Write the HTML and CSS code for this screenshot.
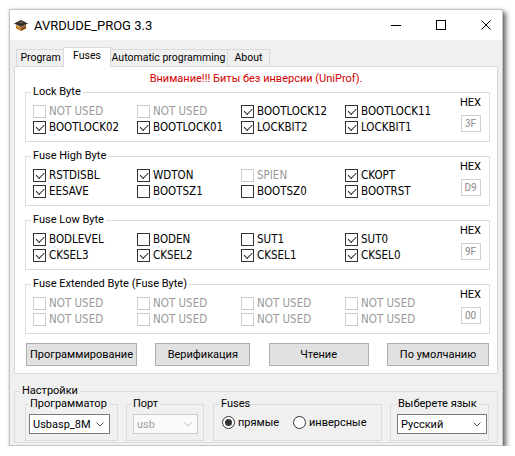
FILE: index.html
```html
<!DOCTYPE html>
<html lang="ru">
<head>
<meta charset="utf-8">
<title>AVRDUDE_PROG 3.3</title>
<link rel="stylesheet" href="styles.css">
</head>
<body>
<div class="window">
  <div class="titlebar">
    <svg class="appicon" width="14" height="12" viewBox="0 0 14 12">
      <polygon points="7,0 14,3.5 7,7 0,3.5" fill="#3b2f25"/>
      <polygon points="2,5 7,7.5 12,5 12,8.5 7,11 2,8.5" fill="#c9862e"/>
      <polygon points="7,7.5 12,5 12,8.5 7,11" fill="#8a5418"/>
      <polygon points="5,2.5 7,1.6 9,2.5 7,3.4" fill="#7a6a58"/>
    </svg>
    <span class="title">AVRDUDE_PROG 3.3</span>
    <div class="caption">
      <svg width="10" height="10" viewBox="0 0 10 10"><line x1="0" y1="5.5" x2="10" y2="5.5" stroke="#000" stroke-width="1"/></svg>
      <svg width="10" height="10" viewBox="0 0 10 10"><rect x="0.5" y="0.5" width="9" height="9" fill="none" stroke="#000" stroke-width="1"/></svg>
      <svg width="10" height="10" viewBox="0 0 10 10"><path d="M0.5 0.5 L9.5 9.5 M9.5 0.5 L0.5 9.5" stroke="#000" stroke-width="1"/></svg>
    </div>
  </div>
  <div class="client">
    <div class="tabstrip">
      <span class="tab t-program">Program</span>
      <span class="tab active t-fuses">Fuses</span>
      <span class="tab t-auto">Automatic programming</span>
      <span class="tab t-about">About</span>
    </div>
    <div class="panel">
      <div class="warning">Внимание!!! Биты без инверсии (UniProf).</div>

      <fieldset class="group">
        <legend>Lock Byte</legend>
        <div class="bits">
          <span class="cb dis"><i></i>NOT USED</span>
          <span class="cb dis"><i></i>NOT USED</span>
          <span class="cb on"><i></i>BOOTLOCK12</span>
          <span class="cb on"><i></i>BOOTLOCK11</span>
          <span class="cb on"><i></i>BOOTLOCK02</span>
          <span class="cb on"><i></i>BOOTLOCK01</span>
          <span class="cb on"><i></i>LOCKBIT2</span>
          <span class="cb on"><i></i>LOCKBIT1</span>
        </div>
        <div class="hex"><span class="hexlabel">HEX</span><span class="hexbox">3F</span></div>
      </fieldset>

      <fieldset class="group">
        <legend>Fuse High Byte</legend>
        <div class="bits">
          <span class="cb on"><i></i>RSTDISBL</span>
          <span class="cb on"><i></i>WDTON</span>
          <span class="cb dis"><i></i>SPIEN</span>
          <span class="cb on"><i></i>CKOPT</span>
          <span class="cb on"><i></i>EESAVE</span>
          <span class="cb"><i></i>BOOTSZ1</span>
          <span class="cb"><i></i>BOOTSZ0</span>
          <span class="cb on"><i></i>BOOTRST</span>
        </div>
        <div class="hex"><span class="hexlabel">HEX</span><span class="hexbox">D9</span></div>
      </fieldset>

      <fieldset class="group">
        <legend>Fuse Low Byte</legend>
        <div class="bits">
          <span class="cb on"><i></i>BODLEVEL</span>
          <span class="cb"><i></i>BODEN</span>
          <span class="cb"><i></i>SUT1</span>
          <span class="cb on"><i></i>SUT0</span>
          <span class="cb on"><i></i>CKSEL3</span>
          <span class="cb on"><i></i>CKSEL2</span>
          <span class="cb on"><i></i>CKSEL1</span>
          <span class="cb on"><i></i>CKSEL0</span>
        </div>
        <div class="hex"><span class="hexlabel">HEX</span><span class="hexbox">9F</span></div>
      </fieldset>

      <fieldset class="group">
        <legend>Fuse Extended Byte (Fuse Byte)</legend>
        <div class="bits">
          <span class="cb dis"><i></i>NOT USED</span>
          <span class="cb dis"><i></i>NOT USED</span>
          <span class="cb dis"><i></i>NOT USED</span>
          <span class="cb dis"><i></i>NOT USED</span>
          <span class="cb dis"><i></i>NOT USED</span>
          <span class="cb dis"><i></i>NOT USED</span>
          <span class="cb dis"><i></i>NOT USED</span>
          <span class="cb dis"><i></i>NOT USED</span>
        </div>
        <div class="hex"><span class="hexlabel">HEX</span><span class="hexbox">00</span></div>
      </fieldset>

      <div class="buttons">
        <span class="btn b1">Программирование</span>
        <span class="btn b2">Верификация</span>
        <span class="btn b3">Чтение</span>
        <span class="btn b4">По умолчанию</span>
      </div>
    </div>

    <fieldset class="settings">
      <legend>Настройки</legend>
      <div class="setrow">
        <fieldset class="sub s-prog">
          <legend>Программатор</legend>
          <span class="combo c-prog">Usbasp_8M<svg width="8" height="5" viewBox="0 0 8 5"><path d="M0.5 0.5 L4 4 L7.5 0.5" fill="none" stroke="#555" stroke-width="1"/></svg></span>
        </fieldset>
        <fieldset class="sub s-port">
          <legend>Порт</legend>
          <span class="combo c-port disabled">usb<svg width="8" height="5" viewBox="0 0 8 5"><path d="M0.5 0.5 L4 4 L7.5 0.5" fill="none" stroke="#bbb" stroke-width="1"/></svg></span>
        </fieldset>
        <fieldset class="sub s-fuses">
          <legend>Fuses</legend>
          <div class="radios">
            <span class="radio r1 on"><i></i>прямые</span>
            <span class="radio"><i></i>инверсные</span>
          </div>
        </fieldset>
        <fieldset class="sub s-lang">
          <legend>Выберете язык</legend>
          <span class="combo c-lang">Русский<svg width="8" height="5" viewBox="0 0 8 5"><path d="M0.5 0.5 L4 4 L7.5 0.5" fill="none" stroke="#555" stroke-width="1"/></svg></span>
        </fieldset>
      </div>
    </fieldset>
  </div>
</div>
</body>
</html>
```
FILE: styles.css
```css
* { box-sizing: border-box; }
html, body { margin: 0; padding: 0; background: #fff; }
body {
  font-family: Roboto, "Liberation Sans", sans-serif;
  font-size: 11px;
  color: #000;
}
.window {
  margin: 9px 0 0 9px;
  width: 494px;
  height: 437px;
  border: 1px solid #c4c4c4;
  background: #f0f0f0;
  display: flex;
  flex-direction: column;
  overflow: hidden;
  box-shadow: 3px 3px 5px rgba(0,0,0,0.6), 0 0 2px rgba(0,0,0,0.12);
}
.titlebar {
  height: 30px;
  flex: none;
  background: #fff;
  display: flex;
  align-items: center;
  padding-left: 4px;
}
.appicon { margin-right: 6px; margin-top: 1px; }
.title { font-size: 13px; }
.caption {
  margin-left: auto;
  display: flex;
  gap: 35px;
  padding-right: 11px;
  align-items: center;
}
.caption svg { display: block; }
.client {
  flex: 1;
  padding: 7px 4px 0 4px;
}
.tabstrip {
  height: 19px;
  display: flex;
  align-items: flex-end;
  padding-left: 2px;
}
.tab {
  height: 17px;
  border: 1px solid #d9d9d9;
  border-bottom: none;
  background: #f0f0f0;
  text-align: center;
  line-height: 16px;
  font-size: 10.5px;
  white-space: nowrap;
}
.tab.active {
  height: 20px;
  margin-bottom: -1px;
  background: #fff;
  position: relative;
  z-index: 2;
  line-height: 16px;
}
.t-program { width: 49px; }
.t-fuses { width: 48px; margin-left: -2px; }
.t-auto { width: 119px; margin-left: -2px; }
.t-about { width: 43px; margin-left: -1px; }
.panel {
  height: 308px;
  border: 1px solid #d9d9d9;
  background: #fff;
  padding: 5px 7px 0 10px;
}
.warning {
  color: #d40000;
  text-align: center;
  line-height: 14px;
  margin-left: -10px;
  margin-right: -7px;
}
fieldset { margin: 0; min-width: 0; }
legend {
  padding: 0 2px;
  margin-left: -2px;
  line-height: 12px;
  white-space: nowrap;
}
.group {
  margin-top: 8px;
  border: 1px solid #dcdcdc;
  padding: 0 7px 6px 7px;
  display: flex;
}
.warning + .group { margin-top: 0; }
.bits {
  margin-top: 5px;
  display: grid;
  grid-template-columns: repeat(4, 104px);
  grid-auto-rows: 16px;
}
.cb {
  display: flex;
  align-items: center;
  font-family: "DejaVu Sans Condensed", "DejaVu Sans", sans-serif;
  font-stretch: condensed;
  font-size: 11.5px;
  white-space: nowrap;
}
.cb i {
  width: 13px;
  height: 13px;
  border: 1px solid #333;
  background: #fff;
  margin-right: 3px;
  position: relative;
  flex: none;
}
.cb.on i::after {
  content: "";
  position: absolute;
  left: 2px;
  top: 2.5px;
  width: 7px;
  height: 3.5px;
  border-left: 1.3px solid #333;
  border-bottom: 1.3px solid #333;
  transform: rotate(-45deg);
}
.cb.dis { color: #9a9a9a; }
.cb.dis i { border-color: #cccccc; }
.hex {
  margin-left: auto;
  margin-top: -2px;
  width: 23px;
  display: flex;
  flex-direction: column;
  align-items: center;
}
.hexlabel { line-height: 14px; }
.hexbox {
  margin-top: 5px;
  width: 20px;
  height: 17px;
  border: 1px solid #d0d0d0;
  color: #8a8a8a;
  font-size: 10px;
  text-align: center;
  line-height: 15px;
}
.buttons {
  margin-top: 9px;
  padding: 0 1px;
  display: flex;
  justify-content: space-between;
}
.btn {
  height: 23px;
  background: #e1e1e1;
  border: 1px solid #adadad;
  text-align: center;
  line-height: 21px;
  white-space: nowrap;
}
.b1 { width: 111px; }
.b2 { width: 95px; }
.b3 { width: 100px; }
.b4 { width: 102px; }
.settings {
  margin-top: 10px;
  border: 1px solid #dcdcdc;
  padding: 0 0 1px 7px;
}
.settings > legend { line-height: 14px; }
.setrow {
  display: flex;
  padding-left: 3px;
}
.sub {
  border: 1px solid #dcdcdc;
  padding: 0 6px 6px 6px;
}
.s-prog { width: 93px; padding-left: 3px; }
.s-prog > legend { margin-left: -1px; }
.s-port { width: 78px; margin-left: 8px; }
.s-fuses { width: 169px; margin-left: 9px; padding-left: 7px; }
.s-lang { width: 99px; margin-left: 8px; }
.s-lang > legend { margin-left: -1px; }
.combo {
  margin-top: 4px;
  height: 20px;
  border: 1px solid #7a7a7a;
  background: #fff;
  display: flex;
  align-items: center;
  padding: 0 5px 0 3px;
  white-space: nowrap;
}
.combo svg { margin-left: auto; display: block; }
.c-prog { width: 81px; }
.c-port { width: 65px; }
.c-lang { width: 90px; }
.combo.disabled {
  border-color: #cccccc;
  background: #fafafa;
  color: #a0a0a0;
}
.radios {
  margin-top: 4px;
  height: 16px;
  display: flex;
  align-items: center;
  padding-left: 1px;
}
.radio {
  display: flex;
  align-items: center;
}
.radio.r1 { width: 71px; }
.radio i {
  width: 13px;
  height: 13px;
  border: 1px solid #333;
  border-radius: 50%;
  background: #fff;
  margin-right: 3px;
  position: relative;
  flex: none;
}
.radio.on i::after {
  content: "";
  position: absolute;
  left: 2px;
  top: 2px;
  width: 7px;
  height: 7px;
  border-radius: 50%;
  background: #333;
}
```
